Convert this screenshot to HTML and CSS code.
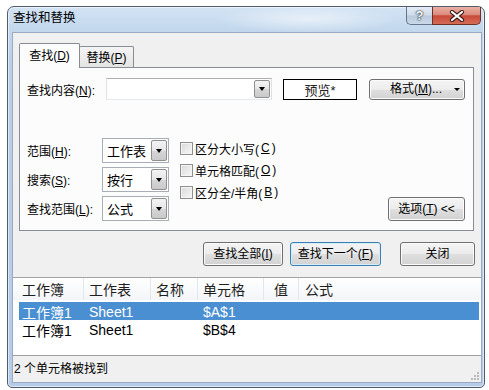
FILE: index.html
```html
<!DOCTYPE html>
<html>
<head>
<meta charset="utf-8">
<title>查找和替换</title>
<link rel="stylesheet" href="styles.css">
</head>
<body>

<div class="window">
	<div class="titlebar">
		<span class="title">查找和替换</span>
		<div class="caption">
			<span class="cap help">?</span>
			<span class="cap close">
				<svg width="16" height="12" viewBox="0 0 16 12">
					<path d="M3 2 L13 10 M13 2 L3 10" stroke="#3b1c18" stroke-width="4.2" stroke-linecap="round"/>
					<path d="M3 2 L13 10 M13 2 L3 10" stroke="#fff" stroke-width="2.2" stroke-linecap="round"/>
				</svg>
			</span>
		</div>
	</div>

	<div class="client">
		<div class="tabs">
			<span class="tab active">查找(<u>D</u>)</span>
			<span class="tab">替换(<u>P</u>)</span>
		</div>

		<div class="panel">
			<div class="find-row">
				<label class="find-label">查找内容(<u>N</u>):</label>
				<div class="combo"><span class="drop"><i class="arrow"></i></span></div>
				<div class="preview">预览*</div>
				<button class="btn format"><span>格式(<u>M</u>)...</span><i class="arrow small"></i></button>
			</div>

			<div class="options">
				<div class="fields">
					<div class="field">
						<label>范围(<u>H</u>):</label>
						<div class="select"><span class="val">工作表</span><span class="drop"><i class="arrow"></i></span></div>
					</div>
					<div class="field">
						<label>搜索(<u>S</u>):</label>
						<div class="select"><span class="val">按行</span><span class="drop"><i class="arrow"></i></span></div>
					</div>
					<div class="field">
						<label>查找范围(<u>L</u>):</label>
						<div class="select"><span class="val">公式</span><span class="drop"><i class="arrow"></i></span></div>
					</div>
				</div>

				<div class="checks">
					<div class="check"><span class="box"></span>区分大小写(<u>C</u>)</div>
					<div class="check"><span class="box"></span>单元格匹配(<u>O</u>)</div>
					<div class="check"><span class="box"></span>区分全/半角(<u>B</u>)</div>
				</div>

				<button class="btn opts">选项(<u>T</u>) &lt;&lt;</button>
			</div>
		</div>

		<div class="actions">
			<button class="btn find-all">查找全部(<u>I</u>)</button>
			<button class="btn find-next default">查找下一个(<u>F</u>)</button>
			<button class="btn close-btn">关闭</button>
		</div>

		<div class="results">
			<div class="head">
				<span>工作簿</span>
				<span>工作表</span>
				<span>名称</span>
				<span>单元格</span>
				<span>值</span>
				<span>公式</span>
			</div>
			<div class="row selected">
				<span>工作簿1</span>
				<span>Sheet1</span>
				<span></span>
				<span>$A$1</span>
				<span></span>
				<span></span>
			</div>
			<div class="row">
				<span>工作簿1</span>
				<span>Sheet1</span>
				<span></span>
				<span>$B$4</span>
				<span></span>
				<span></span>
			</div>
		</div>

		<div class="status">
			2 个单元格被找到
			<svg class="grip" width="10" height="10" viewBox="0 0 10 10">
				<rect x="7" y="1" width="2" height="2" fill="#b9b9b9"/>
				<rect x="4" y="4" width="2" height="2" fill="#b9b9b9"/>
				<rect x="7" y="4" width="2" height="2" fill="#b9b9b9"/>
				<rect x="1" y="7" width="2" height="2" fill="#b9b9b9"/>
				<rect x="4" y="7" width="2" height="2" fill="#b9b9b9"/>
				<rect x="7" y="7" width="2" height="2" fill="#b9b9b9"/>
			</svg>
		</div>
	</div>
</div>

</body>
</html>
```

FILE: styles.css
```css
/* dialog in the windows 7 style */
html, body {
	margin: 0;
	padding: 0;
}

body {
	background: #fff;
	color: #000;
	font: 12px "Liberation Sans", "Noto Sans CJK SC", sans-serif;
	padding: 6px 0 0 7px;
}

u {
	text-decoration: underline;
	text-underline-offset: 1px;
}

button {
	font: inherit;
	color: #000;
}

.window {
	box-sizing: border-box;
	width: 478px;
	height: 382px;
	border: 1px solid #4f5c6c;
	border-radius: 7px 7px 5px 5px;
	padding: 0 2px 4px 4px;
	display: flex;
	flex-direction: column;
	background:
		radial-gradient(ellipse 90px 14px at 300px 12px, rgba(255,255,255,.55), rgba(255,255,255,0)),
		linear-gradient(180deg, #d3e3f4 0, #c1d6ec 26px, #b8cfe9 60px, #b4cce7 100%);
	box-shadow: inset 0 0 0 1px rgba(255,255,255,.55);
}

/* title bar */
.titlebar {
	height: 25px;
	display: flex;
	justify-content: space-between;
	align-items: flex-start;
}

.title {
	font-size: 12.5px;
	line-height: 16px;
	padding: 3px 0 0 1px;
	color: #000;
}

.caption {
	display: flex;
	margin-right: 1px;
}

.cap {
	box-sizing: border-box;
	height: 18px;
	display: flex;
	align-items: center;
	justify-content: center;
	border: 1px solid #66768c;
	border-top: 0;
}

.help {
	width: 26px;
	border-radius: 0 0 0 5px;
	border-right: 0;
	background: linear-gradient(180deg, #e4ecf5 0, #cfdbe9 48%, #b9cadd 52%, #cad8e8 100%);
	color: #fff;
	font-weight: bold;
	font-size: 13px;
	line-height: 14px;
	text-shadow: 0 0 1px #2b3645, 0 0 1px #2b3645, 0 0 2px #2b3645;
}

.close {
	width: 49px;
	border-color: #6f3128;
	border-radius: 0 0 5px 0;
	background: linear-gradient(180deg, #eab0a5 0, #dc8b7c 45%, #c8493a 52%, #d56c57 100%);
}

/* client area */
.client {
	flex: 1;
	display: flex;
	flex-direction: column;
	border: 1px solid #9aabc1;
	background: #f0f0f0;
}

.tabs {
	display: flex;
	align-items: flex-end;
	height: 24px;
	margin: 10px 0 0 6px;
}

.tab {
	box-sizing: border-box;
	display: flex;
	align-items: center;
	justify-content: center;
	border: 1px solid #898c95;
	border-bottom: 0;
	border-radius: 2px 2px 0 0;
	line-height: 14px;
}

.tab.active {
	position: relative;
	z-index: 1;
	width: 61px;
	height: 25px;
	margin-bottom: -1px;
	background: #fcfcfc;
	padding-bottom: 1px;
}

.tab + .tab {
	width: 55px;
	height: 21px;
	margin-left: -1px;
	background: linear-gradient(180deg, #f4f4f4, #e4e4e4);
	padding-top: 1px;
}

.panel {
	margin: 0 7px 0 6px;
	border: 1px solid #898c95;
	background: #fcfcfc;
	padding: 10px 8px 9px 7px;
}

.find-row {
	display: flex;
	align-items: center;
	height: 22px;
}

.find-label {
	width: 79px;
}

.combo {
	box-sizing: border-box;
	width: 166px;
	height: 22px;
	border: 1px solid #abadb3;
	border-color: #abadb3 #dbdfe6 #e3e9ef #e2e3ea;
	background: #fff;
	display: flex;
	justify-content: flex-end;
}

.drop {
	box-sizing: border-box;
	width: 16px;
	margin: 1px;
	border: 1px solid #8f8f8f;
	border-radius: 2px;
	background: linear-gradient(180deg, #f3f3f3 0, #e6e6e6 50%, #d6d6d6 51%, #cacaca 100%);
	display: flex;
	align-items: center;
	justify-content: center;
}

.arrow {
	width: 0;
	height: 0;
	border-left: 3.5px solid transparent;
	border-right: 3.5px solid transparent;
	border-top: 4px solid #000;
}

.arrow.small {
	border-left-width: 3px;
	border-right-width: 3px;
	border-top-width: 3px;
}

.preview {
	box-sizing: border-box;
	width: 74px;
	height: 21px;
	margin-left: 11px;
	border: 1px solid #000;
	background: #fff;
	display: flex;
	align-items: center;
	justify-content: center;
	font-size: 13px;
	color: #222;
}

.btn {
	box-sizing: border-box;
	padding: 0;
	border: 1px solid #707070;
	border-radius: 3px;
	background: linear-gradient(180deg, #f4f4f4 0, #ececec 50%, #dfdfdf 51%, #d2d2d2 100%);
	box-shadow: inset 0 0 0 1px #fbfbfb;
	display: flex;
	align-items: center;
	justify-content: center;
	height: 24px;
	line-height: 14px;
}

.btn.default {
	border-color: #3c7fb1;
	box-shadow: inset 0 0 0 1px #d2ecfa;
}

.format {
	width: 96px;
	height: 21px;
	margin-left: 12px;
	justify-content: flex-start;
	padding-left: 20px;
}

.format .arrow {
	margin-left: 12px;
}

/* range / search options */
.options {
	display: flex;
	margin-top: 38px;
	height: 83px;
}

.fields {
	display: flex;
	flex-direction: column;
	gap: 4px;
}

.field {
	display: flex;
	align-items: center;
	height: 25px;
}

.field label {
	width: 75px;
}

.select {
	box-sizing: border-box;
	width: 67px;
	height: 25px;
	border: 1px solid #a8aeb6;
	background: #fff;
	display: flex;
	align-items: stretch;
}

.select .val {
	flex: 1;
	display: flex;
	align-items: center;
	padding-left: 4px;
	font-size: 13px;
}

.select .drop {
	margin: 1px;
}

.checks {
	margin: -1px 0 0 11px;
}

.check {
	display: flex;
	align-items: center;
	gap: 2px;
	height: 22px;
}

.box {
	box-sizing: border-box;
	width: 13px;
	height: 13px;
	border: 1px solid #8e8f8f;
	background: linear-gradient(135deg, #d8d8d8, #f8f8f8);
	box-shadow: inset 0 0 0 1px #f4f4f4;
}

.opts {
	width: 77px;
	margin-left: auto;
	align-self: flex-end;
}

/* action buttons */
.actions {
	display: flex;
	justify-content: flex-end;
	margin: 11px 6px 0 0;
}

.find-all {
	width: 80px;
}

.find-next {
	width: 91px;
	margin-left: 7px;
}

.close-btn {
	width: 75px;
	margin-left: 19px;
}

/* result list */
.results {
	flex: 1;
	margin-top: 11px;
	border-top: 1px solid #a3a3a3;
	background: #fff;
	font-size: 14px;
}

.head {
	display: grid;
	grid-template-columns: 71px 67px 47px 66px 35px 1fr;
	height: 22px;
	background: linear-gradient(180deg, #ffffff, #f3f5f8);
}

.head span {
	box-sizing: border-box;
	display: flex;
	align-items: center;
	padding-left: 5px;
	border-right: 1px solid #e3e6eb;
	color: #1e1e1e;
}

.head span:first-child {
	padding-left: 9px;
}

.head span:nth-child(5) {
	padding-left: 10px;
}

.head span:last-child {
	border-right: 0;
	padding-left: 6px;
}

.row {
	display: grid;
	grid-template-columns: 65px 67px 47px 66px 35px 1fr;
	height: 18px;
	margin: 0 2px 0 6px;
}

.row.selected {
	margin-top: 2px;
	background: #4a8fd1;
	color: #fff;
}

.row span {
	display: flex;
	align-items: center;
	padding-left: 5px;
}

.row span:first-child {
	padding-left: 3px;
}

/* status bar */
.status {
	position: relative;
	height: 26px;
	border-top: 1px solid #a0a0a0;
	display: flex;
	align-items: center;
	padding: 0 0 3px 1px;
	box-sizing: border-box;
	height: 27px;
}

.grip {
	position: absolute;
	right: 1px;
	bottom: 1px;
}
```
